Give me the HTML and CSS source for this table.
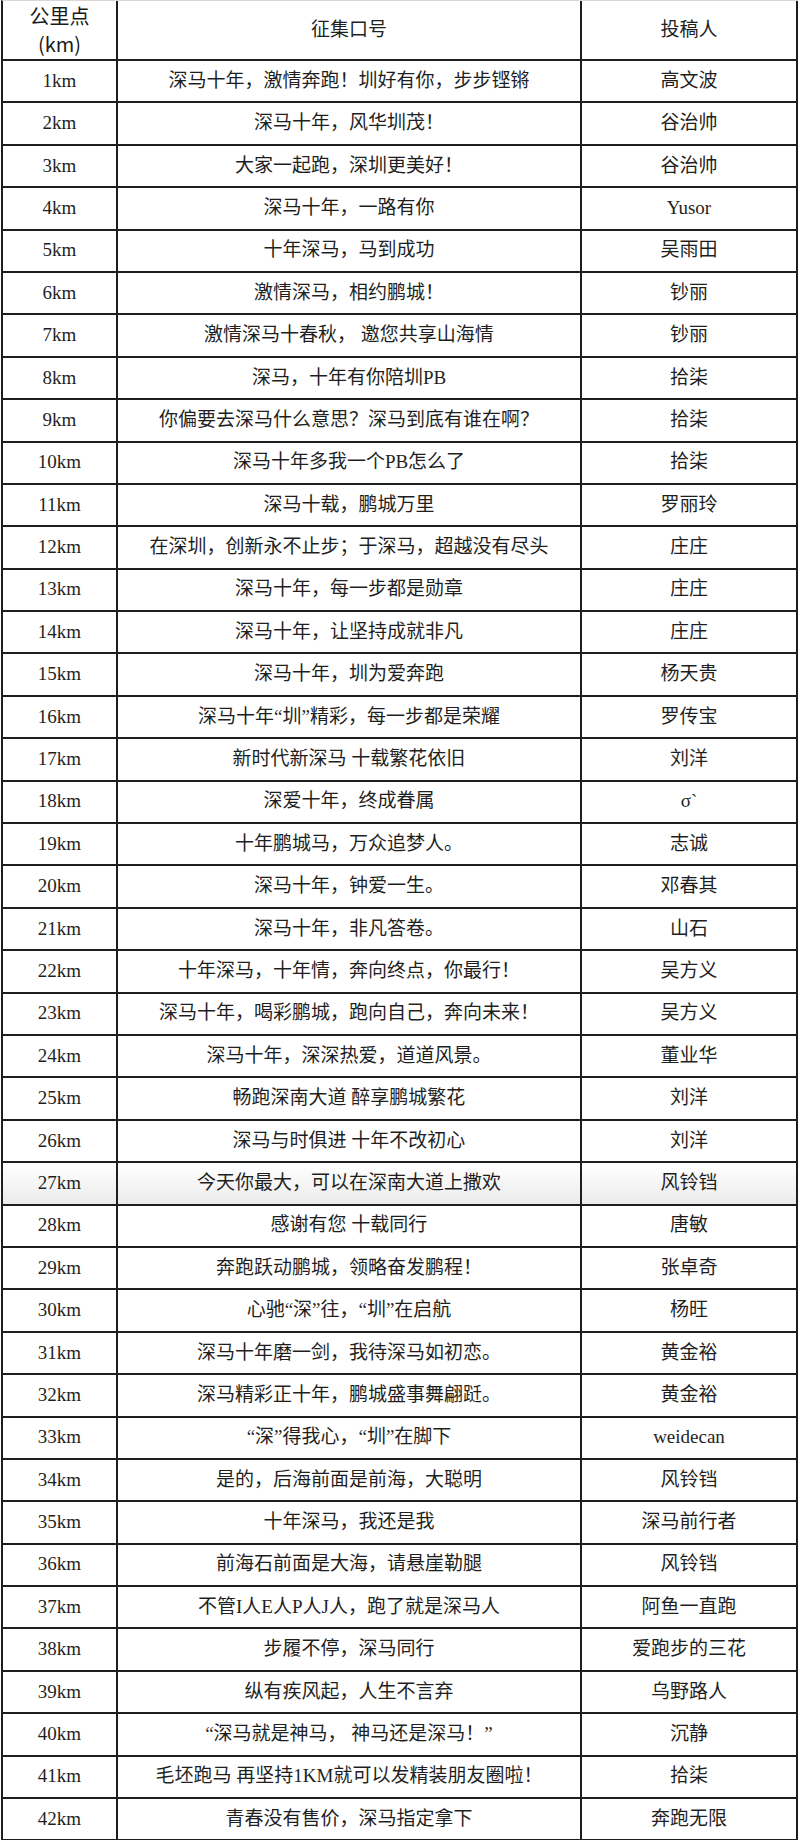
FILE: index.html
```html
<!DOCTYPE html>
<html lang="zh-CN">
<head>
<meta charset="utf-8">
<title>征集口号</title>
<link rel="stylesheet" href="styles.css">
</head>
<body>
<div class="sheet">
  <div class="row head">
    <div class="cell km-head"><span>公里点</span><span>(km)</span></div>
    <div class="cell">征集口号</div>
    <div class="cell">投稿人</div>
  </div>
  <div class="row"><div class="cell">1km</div><div class="cell">深马十年，激情奔跑！圳好有你，步步铿锵</div><div class="cell">高文波</div></div>
  <div class="row"><div class="cell">2km</div><div class="cell">深马十年，风华圳茂！</div><div class="cell">谷治帅</div></div>
  <div class="row"><div class="cell">3km</div><div class="cell">大家一起跑，深圳更美好！</div><div class="cell">谷治帅</div></div>
  <div class="row"><div class="cell">4km</div><div class="cell">深马十年，一路有你</div><div class="cell">Yusor</div></div>
  <div class="row"><div class="cell">5km</div><div class="cell">十年深马，马到成功</div><div class="cell">吴雨田</div></div>
  <div class="row"><div class="cell">6km</div><div class="cell">激情深马，相约鹏城！</div><div class="cell">钞丽</div></div>
  <div class="row"><div class="cell">7km</div><div class="cell">激情深马十春秋， 邀您共享山海情</div><div class="cell">钞丽</div></div>
  <div class="row"><div class="cell">8km</div><div class="cell">深马，十年有你陪圳PB</div><div class="cell">拾柒</div></div>
  <div class="row"><div class="cell">9km</div><div class="cell">你偏要去深马什么意思？深马到底有谁在啊？</div><div class="cell">拾柒</div></div>
  <div class="row"><div class="cell">10km</div><div class="cell">深马十年多我一个PB怎么了</div><div class="cell">拾柒</div></div>
  <div class="row"><div class="cell">11km</div><div class="cell">深马十载，鹏城万里</div><div class="cell">罗丽玲</div></div>
  <div class="row"><div class="cell">12km</div><div class="cell">在深圳，创新永不止步；于深马，超越没有尽头</div><div class="cell">庄庄</div></div>
  <div class="row"><div class="cell">13km</div><div class="cell">深马十年，每一步都是勋章</div><div class="cell">庄庄</div></div>
  <div class="row"><div class="cell">14km</div><div class="cell">深马十年，让坚持成就非凡</div><div class="cell">庄庄</div></div>
  <div class="row"><div class="cell">15km</div><div class="cell">深马十年，圳为爱奔跑</div><div class="cell">杨天贵</div></div>
  <div class="row"><div class="cell">16km</div><div class="cell">深马十年“圳”精彩，每一步都是荣耀</div><div class="cell">罗传宝</div></div>
  <div class="row"><div class="cell">17km</div><div class="cell">新时代新深马 十载繁花依旧</div><div class="cell">刘洋</div></div>
  <div class="row"><div class="cell">18km</div><div class="cell">深爱十年，终成眷属</div><div class="cell">σˋ</div></div>
  <div class="row"><div class="cell">19km</div><div class="cell">十年鹏城马，万众追梦人。</div><div class="cell">志诚</div></div>
  <div class="row"><div class="cell">20km</div><div class="cell">深马十年，钟爱一生。</div><div class="cell">邓春其</div></div>
  <div class="row"><div class="cell">21km</div><div class="cell">深马十年，非凡答卷。</div><div class="cell">山石</div></div>
  <div class="row"><div class="cell">22km</div><div class="cell">十年深马，十年情，奔向终点，你最行！</div><div class="cell">吴方义</div></div>
  <div class="row"><div class="cell">23km</div><div class="cell">深马十年，喝彩鹏城，跑向自己，奔向未来！</div><div class="cell">吴方义</div></div>
  <div class="row"><div class="cell">24km</div><div class="cell">深马十年，深深热爱，道道风景。</div><div class="cell">董业华</div></div>
  <div class="row"><div class="cell">25km</div><div class="cell">畅跑深南大道 醉享鹏城繁花</div><div class="cell">刘洋</div></div>
  <div class="row"><div class="cell">26km</div><div class="cell">深马与时俱进 十年不改初心</div><div class="cell">刘洋</div></div>
  <div class="row shaded"><div class="cell">27km</div><div class="cell">今天你最大，可以在深南大道上撒欢</div><div class="cell">风铃铛</div></div>
  <div class="row"><div class="cell">28km</div><div class="cell">感谢有您 十载同行</div><div class="cell">唐敏</div></div>
  <div class="row"><div class="cell">29km</div><div class="cell">奔跑跃动鹏城，领略奋发鹏程！</div><div class="cell">张卓奇</div></div>
  <div class="row"><div class="cell">30km</div><div class="cell">心驰“深”往，“圳”在启航</div><div class="cell">杨旺</div></div>
  <div class="row"><div class="cell">31km</div><div class="cell">深马十年磨一剑，我待深马如初恋。</div><div class="cell">黄金裕</div></div>
  <div class="row"><div class="cell">32km</div><div class="cell">深马精彩正十年，鹏城盛事舞翩跹。</div><div class="cell">黄金裕</div></div>
  <div class="row"><div class="cell">33km</div><div class="cell">“深”得我心，“圳”在脚下</div><div class="cell">weidecan</div></div>
  <div class="row"><div class="cell">34km</div><div class="cell">是的，后海前面是前海，大聪明</div><div class="cell">风铃铛</div></div>
  <div class="row"><div class="cell">35km</div><div class="cell">十年深马，我还是我</div><div class="cell">深马前行者</div></div>
  <div class="row"><div class="cell">36km</div><div class="cell">前海石前面是大海，请悬崖勒腿</div><div class="cell">风铃铛</div></div>
  <div class="row"><div class="cell">37km</div><div class="cell">不管I人E人P人J人，跑了就是深马人</div><div class="cell">阿鱼一直跑</div></div>
  <div class="row"><div class="cell">38km</div><div class="cell">步履不停，深马同行</div><div class="cell">爱跑步的三花</div></div>
  <div class="row"><div class="cell">39km</div><div class="cell">纵有疾风起，人生不言弃</div><div class="cell">乌野路人</div></div>
  <div class="row"><div class="cell">40km</div><div class="cell">“深马就是神马， 神马还是深马！”</div><div class="cell">沉静</div></div>
  <div class="row"><div class="cell">41km</div><div class="cell">毛坯跑马 再坚持1KM就可以发精装朋友圈啦！</div><div class="cell">拾柒</div></div>
  <div class="row"><div class="cell">42km</div><div class="cell">青春没有售价，深马指定拿下</div><div class="cell">奔跑无限</div></div>
</div>
</body>
</html>
```

FILE: styles.css
```css
html, body {
  margin: 0;
  padding: 0;
  background: #ffffff;
}

body {
  font-family: "Liberation Serif", "Noto Sans CJK SC", serif;
  font-size: 19px;
  color: #1f1f1f;
}

.sheet {
  margin-left: 1px;
  width: 797px;
  box-sizing: border-box;
  border-left: 2px solid #1e1e1e;
  border-top: 1px solid #d8d8d8;
  display: flex;
  flex-direction: column;
}

.row {
  display: grid;
  grid-template-columns: 115px 464px 216px;
  height: 42.4px;
  flex: none;
}

.row.head {
  height: 60px;
}

.row.shaded {
  background: linear-gradient(to bottom, #ffffff 0%, #f3f3f3 60%, #e9e9e9 100%);
}

.cell {
  box-sizing: border-box;
  border-right: 2px solid #1e1e1e;
  border-bottom: 2px solid #1e1e1e;
  display: flex;
  align-items: center;
  justify-content: center;
  text-align: center;
  white-space: nowrap;
  line-height: 1.2;
}

.km-head {
  flex-direction: column;
  font-family: "Noto Sans CJK SC", sans-serif;
  font-size: 20px;
  line-height: 28px;
  color: #1a1a1a;
}
```
